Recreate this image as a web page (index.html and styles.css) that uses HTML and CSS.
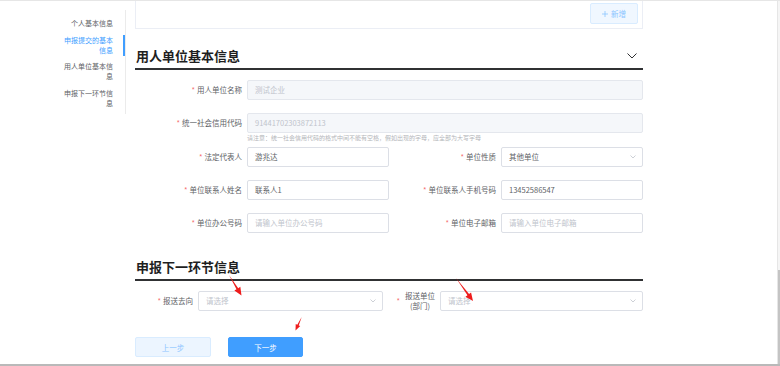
FILE: index.html
```html
<!DOCTYPE html>
<html lang="zh-CN">
<head>
<meta charset="utf-8">
<title>申报</title>
<link rel="stylesheet" href="styles.css">
</head>
<body>
<div class="page">
  <aside class="sidebar">
    <nav class="nav">
      <div class="nav-item">个人基本信息</div>
      <div class="nav-item active">申报提交的基本信息</div>
      <div class="nav-item">用人单位基本信息</div>
      <div class="nav-item">申报下一环节信息</div>
    </nav>
  </aside>

  <main class="main">
    <div class="top-card">
      <button class="btn-add" type="button">
        <svg width="6" height="6" viewBox="0 0 6 6"><path d="M3 0V6M0 3H6" stroke="#8cc5ff" stroke-width="0.8" fill="none"/></svg>
        <span>新增</span>
      </button>
    </div>

    <div class="sec-head">
      <h2>用人单位基本信息</h2>
      <svg class="chev" width="10" height="6" viewBox="0 0 10 6"><polyline points="0.5,0.5 5,5 9.5,0.5" fill="none" stroke="#303133" stroke-width="1"/></svg>
    </div>

    <div class="form form1">
      <div class="row">
        <div class="field">
          <label class="label"><span class="req">*</span>用人单位名称</label>
          <div class="input disabled">测试企业</div>
        </div>
      </div>
      <div class="row with-hint">
        <div class="field">
          <label class="label"><span class="req">*</span>统一社会信用代码</label>
          <div class="input disabled">91441702303872113</div>
        </div>
        <div class="hint">请注意：统一社会信用代码的格式中间不能有空格，假如出现的字母，应全部为大写字母</div>
      </div>
      <div class="row grid2">
        <div class="field">
          <label class="label"><span class="req">*</span>法定代表人</label>
          <div class="input">游兆达</div>
        </div>
        <div class="field">
          <label class="label"><span class="req">*</span>单位性质</label>
          <div class="input select">其他单位<svg class="sel-chev" width="6" height="4" viewBox="0 0 6 4"><polyline points="0.5,0.5 3,3 5.5,0.5" fill="none" stroke="#c0c4cc" stroke-width="0.8"/></svg></div>
        </div>
      </div>
      <div class="row grid2">
        <div class="field">
          <label class="label"><span class="req">*</span>单位联系人姓名</label>
          <div class="input">联系人1</div>
        </div>
        <div class="field">
          <label class="label"><span class="req">*</span>单位联系人手机号码</label>
          <div class="input">13452586547</div>
        </div>
      </div>
      <div class="row grid2">
        <div class="field">
          <label class="label"><span class="req">*</span>单位办公号码</label>
          <div class="input placeholder">请输入单位办公号码</div>
        </div>
        <div class="field">
          <label class="label"><span class="req">*</span>单位电子邮箱</label>
          <div class="input placeholder">请输入单位电子邮箱</div>
        </div>
      </div>
    </div>

    <div class="sec-head second">
      <h2>申报下一环节信息</h2>
    </div>

    <div class="form form2">
      <div class="row2">
        <div class="field">
          <label class="label label-s"><span class="req">*</span>报送去向</label>
          <div class="input select placeholder">请选择<svg class="sel-chev" width="6" height="4" viewBox="0 0 6 4"><polyline points="0.5,0.5 3,3 5.5,0.5" fill="none" stroke="#c0c4cc" stroke-width="0.8"/></svg></div>
        </div>
        <div class="field">
          <label class="label label-w"><span class="req req-w">*</span><span class="label-text">报送单位<br>(部门)</span></label>
          <div class="input select placeholder">请选择<svg class="sel-chev" width="6" height="4" viewBox="0 0 6 4"><polyline points="0.5,0.5 3,3 5.5,0.5" fill="none" stroke="#c0c4cc" stroke-width="0.8"/></svg></div>
        </div>
      </div>
      <div class="actions">
        <button class="btn btn-prev" type="button">上一步</button>
        <button class="btn btn-next" type="button">下一步</button>
      </div>
    </div>
  </main>

  <div class="scrollbar"><div class="thumb"></div></div>

  <svg class="annotations" width="780" height="366" viewBox="0 0 780 366">
    <polygon fill="#ee1c1c" points="229,275 238.19,288.15 240.33,286.85 241.5,295.5 234.35,290.49 236.49,289.19"/>
    <polygon fill="#ee1c1c" points="456,278 469.05,293.98 471.06,292.49 473,301 465.44,296.65 467.45,295.16"/>
    <polygon fill="#ee1c1c" points="301.7,317 298.73,325.38 300.27,326.09 295.5,330.5 295.73,324.01 297.27,324.72"/>
  </svg>
</div>
</body>
</html>
```

FILE: styles.css
```css
* {
  box-sizing: border-box;
}

body {
  margin: 0;
  font-family: "Noto Sans CJK SC", "Noto Sans", sans-serif;
  color: #606266;
  background: #fff;
}

.page {
  position: relative;
  display: flex;
  width: 780px;
  height: 366px;
  border-top: 1px solid #e6e6e6;
  border-bottom: 2px solid #b9b9b9;
  overflow: hidden;
}

/* sidebar */
.sidebar {
  width: 126px;
  flex: none;
  padding: 9px 0 0 62px;
}

.nav {
  border-right: 1px solid #ebebeb;
  padding: 8px 0 6px;
}

.nav-item {
  position: relative;
  padding-right: 12px;
  text-align: right;
  font-size: 7px;
  line-height: 10px;
  color: #606266;
  margin-bottom: 6.5px;
}

.nav-item:last-child {
  margin-bottom: 0;
}

.nav-item.active {
  color: #409eff;
}

.nav-item.active::after {
  content: "";
  position: absolute;
  right: 0;
  top: 0;
  bottom: -1px;
  width: 2px;
  background: #409eff;
}

/* main */
.main {
  width: 508px;
  flex: none;
  margin-left: 9px;
}

.top-card {
  height: 28px;
  border: 1px solid #ebeef5;
  border-top: none;
  display: flex;
  justify-content: flex-end;
  align-items: flex-start;
  padding: 2px 4px 0;
}

.btn-add {
  width: 48px;
  height: 21px;
  border: 1px solid #d9ecff;
  background: #f0f7ff;
  border-radius: 2px;
  color: #8cc5ff;
  font-family: inherit;
  font-size: 7.5px;
  display: flex;
  align-items: center;
  justify-content: center;
  gap: 3px;
  padding: 0;
}

.sec-head {
  display: flex;
  align-items: center;
  justify-content: space-between;
  margin-top: 18px;
  padding: 0 6px 3px 1px;
  border-bottom: 2px solid #303133;
}

.sec-head h2 {
  margin: 0;
  font-size: 13px;
  line-height: 18px;
  font-weight: 700;
  color: #1f1f1f;
}

.sec-head.second {
  margin-top: 12px;
}

.form {
  display: flow-root;
  padding-top: 10px;
}

.row {
  display: flex;
  margin-bottom: 13px;
}

.row > .field {
  flex: 1;
}

.row.with-hint {
  display: block;
  margin-bottom: 5px;
}

.row.grid2 {
  display: grid;
  grid-template-columns: 254px 254px;
}

.field {
  display: flex;
  align-items: center;
}

.label {
  width: 112px;
  flex: none;
  padding-right: 5px;
  text-align: right;
  font-size: 7.5px;
  line-height: 10px;
  color: #606266;
  white-space: nowrap;
}

.req {
  color: #f56c6c;
  margin-right: 2px;
}

.input {
  flex: 1;
  min-width: 0;
  height: 20px;
  border: 1px solid #dcdfe6;
  border-radius: 2px;
  padding: 0 6px 0 7px;
  font-size: 7.5px;
  line-height: 18px;
  color: #606266;
  display: flex;
  align-items: center;
  white-space: nowrap;
}

.input.disabled {
  background: #f5f7fa;
  border-color: #e4e7ed;
  color: #c0c4cc;
}

.input.placeholder {
  color: #c0c4cc;
}

.sel-chev {
  margin-left: auto;
}

.hint {
  margin: 1px 0 0 112px;
  font-size: 6px;
  line-height: 8px;
  color: #b3b5b9;
  white-space: nowrap;
}

.row2 {
  display: grid;
  grid-template-columns: 248px 254px;
  column-gap: 6px;
}

.label-s {
  width: 63px;
}

.label-w {
  width: 51px;
  display: flex;
  justify-content: flex-end;
  align-items: center;
}

.req-w {
  margin-right: 5px;
}

.label-text {
  text-align: center;
  line-height: 10px;
}

.actions {
  display: flex;
  gap: 17px;
  margin-top: 26px;
}

.btn {
  height: 20px;
  padding: 0;
  font-family: inherit;
  font-size: 7.5px;
  border-radius: 2px;
  border: 1px solid;
}

.btn-prev {
  width: 76px;
  background: #ecf5ff;
  border-color: #d9ecff;
  color: #8cc5ff;
}

.btn-next {
  width: 75px;
  background: #409eff;
  border-color: #409eff;
  color: #fff;
}

/* scrollbar */
.scrollbar {
  margin-left: auto;
  width: 3px;
  flex: none;
  border-left: 1px solid #e6e6e6;
  background: #f5f5f5;
  display: flex;
  flex-direction: column;
}

.thumb {
  margin-top: 269px;
  flex: 1;
  background: #c4c4c4;
}

/* annotation overlay */
.annotations {
  position: absolute;
  left: 0;
  top: -1px;
  pointer-events: none;
}
```
